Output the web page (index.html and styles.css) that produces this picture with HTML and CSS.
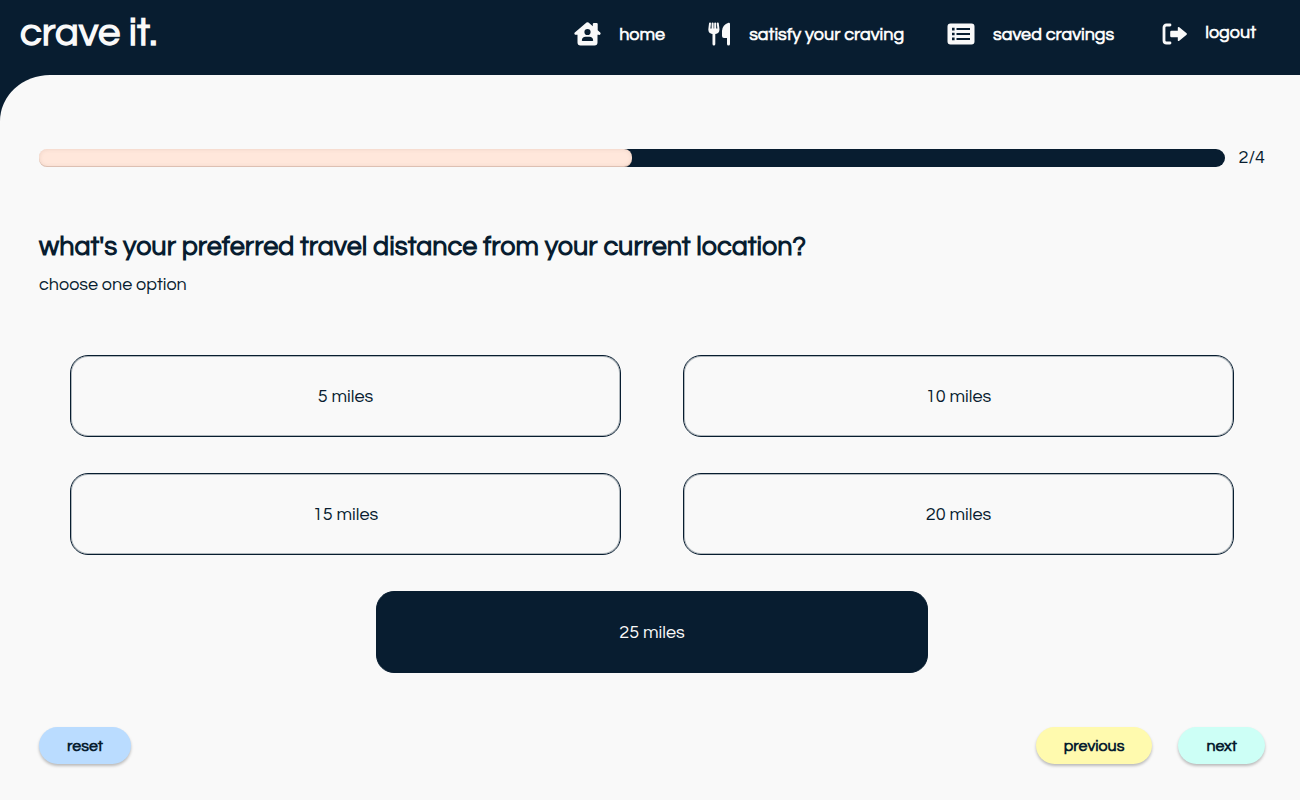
FILE: index.html
```html
<!DOCTYPE html>
<html lang="en">
<head>
<meta charset="utf-8">
<meta name="viewport" content="width=device-width, initial-scale=1">
<title>crave it.</title>
<link rel="stylesheet" href="styles.css">
</head>
<body>
<header class="header">
  <a class="logo" href="#">crave it.</a>
  <nav class="nav" aria-label="Main">
    <a class="nav-item" href="#">
      <svg width="27" height="24" viewBox="0 0 27 24" aria-hidden="true">
        <path fill="currentColor" fill-rule="evenodd" d="M12.5.6Q13.5-.2 14.5.6L18.8 4.2V2Q18.8.9 20 .9h2.600Q23.700.9 23.700 2v6.300l2.500 2.200Q27 11.300 26.400 12.200T24.800 12.800H23.500V20.500Q23.500 23.500 20.500 23.500H6.500Q3.500 23.500 3.500 20.500V12.800H2.200Q1.200 13 .6 12.200T.8 10.500zM13.500 6.900a3.100 3.100 0 1 0 0 6.200a3.100 3.100 0 1 0 0-6.200zM11.500 14.800Q8.200 15 7.800 18.300Q7.800 19 8.600 19h9.800Q19.200 19 19.200 18.300Q18.800 15 15.500 14.800z"/>
      </svg>
      <span>home</span>
    </a>
    <a class="nav-item" href="#">
      <svg width="23" height="24" viewBox="0 0 23 24" aria-hidden="true">
        <path fill="none" stroke="currentColor" stroke-width="2" stroke-linecap="round" stroke-linejoin="round" d="M2 1.500 1.300 7.500Q1.300 11 5.900 11T10.500 7.500L9.800 1.500M4.600 1.500v7M7.200 1.500v7"/>
        <path fill="currentColor" d="M1.500 6.500h8.800Q10.500 11 7.300 11.700V22Q7.300 23.500 5.900 23.500T4.500 22V11.700Q1.500 11 1.500 6.500zM20.500.8Q22 .5 22 2V22Q22 23.500 20.500 23.500T19 22V16H16Q14 16 14 14V9Q14.500 2.500 20.500.8z"/>
      </svg>
      <span>satisfy your craving</span>
    </a>
    <a class="nav-item" href="#">
      <svg width="28" height="22" viewBox="0 0 28 22" aria-hidden="true">
        <path fill="currentColor" fill-rule="evenodd" d="M3.500.5h21a3 3 0 0 1 3 3v15a3 3 0 0 1-3 3h-21a3 3 0 0 1-3-3v-15a3 3 0 0 1 3-3zM5 4.800v2.600h2.600V4.800zM9.500 5.100v2h13.500v-2zM5 9.700v2.600h2.600V9.700zM9.500 10v2h13.500v-2zM5 14.600v2.600h2.600v-2.600zM9.500 14.900v2h13.500v-2z"/>
      </svg>
      <span>saved cravings</span>
    </a>
    <button class="nav-item nav-logout" type="button">
      <svg width="25" height="22" viewBox="0 0 25 22" aria-hidden="true">
        <path fill="none" stroke="currentColor" stroke-width="2.800" stroke-linecap="round" stroke-linejoin="round" d="M8 2H4.500Q2 2 2 4.500v13Q2 20 4.500 20H8"/>
        <path fill="currentColor" d="M9.500 7.800h6.300V4.600q.3-1.200 1.500-.4l7.300 6.100q.6.700 0 1.400l-7.300 6.100q-1.200.8-1.500-.4v-3.200H9.500q-1.300 0-1.300-1.300V9.100Q8.200 7.800 9.500 7.800z"/>
      </svg>
      <span class="logout-label">logout</span>
    </button>
  </nav>
</header>
<main class="main">
  <div class="progress">
    <div class="progress-track" role="progressbar" aria-label="Quiz progress" aria-valuemin="0" aria-valuemax="4" aria-valuenow="2">
      <div class="progress-fill" style="width: 50%"></div>
    </div>
    <span class="progress-count">2/4</span>
  </div>
  <h1 class="question">what's your preferred travel distance from your current location?</h1>
  <p class="hint">choose one option</p>
  <div class="options">
    <button class="option" type="button" aria-pressed="false">5 miles</button>
    <button class="option" type="button" aria-pressed="false">10 miles</button>
    <button class="option" type="button" aria-pressed="false">15 miles</button>
    <button class="option" type="button" aria-pressed="false">20 miles</button>
    <button class="option option-selected" type="button" aria-pressed="true">25 miles</button>
  </div>
  <div class="actions">
    <button class="action action-reset" type="button">reset</button>
    <button class="action action-previous" type="button">previous</button>
    <button class="action action-next" type="button">next</button>
  </div>
</main>
</body>
</html>
```
FILE: styles.css
```css
:root {
  --navy: #081d30;
  --paper: #f9f9f9;
}

* {
  box-sizing: border-box;
}

body {
  margin: 0;
  min-height: 100vh;
  display: flex;
  flex-direction: column;
  background: var(--navy);
  color: var(--navy);
  font-family: Questrial, Inter, "Liberation Sans", sans-serif;
  font-feature-settings: "cv11";
  font-size: 18px;
  font-weight: 400;
}

button {
  font: inherit;
  font-feature-settings: inherit;
  color: inherit;
  cursor: pointer;
}

.header {
  display: flex;
  justify-content: space-between;
  align-items: flex-start;
  padding: 12px 44px 19px 20px;
  color: var(--paper);
}

.logo {
  color: inherit;
  font-size: 40px;
  font-weight: 700;
  line-height: 42px;
  text-decoration: none;
}

.nav {
  display: flex;
  gap: 43px;
}

.nav-item {
  display: flex;
  align-items: center;
  gap: 18px;
  height: 44px;
  padding: 0;
  border: 0;
  background: none;
  color: inherit;
  font-size: 18px;
  font-weight: 700;
  text-decoration: none;
}

.nav-logout {
  margin-left: 5px;
}

.logout-label {
  padding-bottom: 4px;
}

.main {
  flex: 1;
  padding: 74px 35px 32px 39px;
  border-top-left-radius: 50px 46px;
  background: var(--paper);
}

.progress {
  display: flex;
  align-items: center;
  gap: 14px;
  height: 18px;
}

.progress-track {
  flex: 1;
  height: 18px;
  border-radius: 9px;
  background: linear-gradient(to right, #ffe7db 25%, var(--navy) 25%);
}

.progress-fill {
  height: 100%;
  border-radius: 8px;
  background: #ffe7db;
  box-shadow: inset 0 0 4px rgba(120, 80, 60, 0.15), inset 0 -1px 0 rgba(120, 80, 60, 0.2);
}

.progress-count {
  line-height: 18px;
}

.question {
  margin: 62px 0 0;
  font-size: 27px;
  font-weight: 700;
  line-height: 36px;
}

.hint {
  margin: 8px 0 0;
  line-height: 24px;
}

.options {
  display: flex;
  flex-wrap: wrap;
  justify-content: space-around;
  row-gap: 36px;
  margin-top: 58px;
}

.option {
  width: 45%;
  height: 82px;
  padding: 0 16px;
  border: 1px solid var(--navy);
  border-radius: 18px;
  background: transparent;
  box-shadow: inset 0 0 0 1px rgba(8, 29, 48, 0.3);
}

.option-selected {
  background: var(--navy);
  color: var(--paper);
}

.actions {
  display: flex;
  gap: 26px;
  margin-top: 54px;
}

.action {
  height: 37px;
  padding: 0 28px;
  border: 0;
  border-radius: 19px;
  font-size: 16px;
  font-weight: 700;
  box-shadow: 0 2px 3px rgba(0, 0, 0, 0.25);
}

.action-reset {
  margin-right: auto;
  background: #badcff;
}

.action-previous {
  background: #fffaae;
}

.action-next {
  background: #cdfff6;
}
```
